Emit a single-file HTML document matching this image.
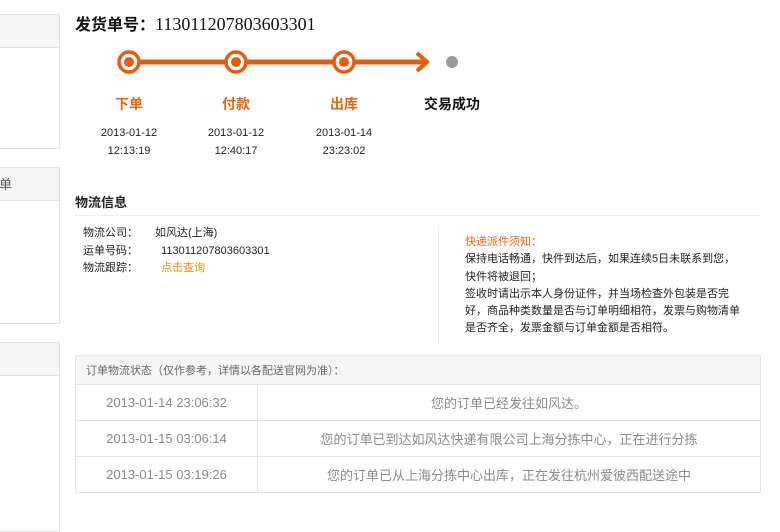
<!DOCTYPE html>
<html><head><meta charset="utf-8"><style>
*{margin:0;padding:0;box-sizing:border-box}
body{width:780px;height:516px;background:#fff;position:relative;overflow:hidden;font-family:"Liberation Sans","Noto Sans CJK SC",sans-serif;color:#222}
.a{position:absolute;white-space:nowrap}
.box{position:absolute;left:-2px;width:62px;border:1px solid #e2e2e2;background:#fff}
.box .h{height:33px;background:#f5f5f5;border-bottom:1px solid #e2e2e2;font-size:13px;color:#555;line-height:33px}
.or{color:#e8650f}
.s{font-size:11px}
table{position:absolute;left:75px;top:355px;width:686px;border-collapse:collapse;font-size:13px;color:#8a8a8a}
td{border:1px solid #e4e4e4;text-align:center;height:36px}
</style></head><body>
<div class="box" style="top:14px;height:135px"><div class="h"></div></div>
<div class="box" style="top:167px;height:157px"><div class="h">单</div></div>
<div class="box" style="top:342px;height:190px"><div class="h"></div></div>

<div class="a" style="left:75px;top:11px;font-size:16px;font-weight:bold;color:#111">发货单号：<span style="font-weight:normal;font-family:'Liberation Serif',serif;font-size:18px">113011207803603301</span></div>

<svg class="a" style="left:0;top:0" width="780" height="90">
<line x1="129" y1="62" x2="425" y2="62" stroke="#e95a0c" stroke-width="5"/>
<polyline points="417,53 427,62 417,71" fill="none" stroke="#e95a0c" stroke-width="4"/>
<g fill="#fff" stroke="#e95a0c" stroke-width="3.5">
<circle cx="129" cy="62" r="10"/><circle cx="236" cy="62" r="10"/><circle cx="344" cy="62" r="10"/></g>
<g fill="#e95a0c"><circle cx="129" cy="62" r="5"/><circle cx="236" cy="62" r="5"/><circle cx="344" cy="62" r="5"/></g>
<circle cx="452" cy="62" r="6" fill="#999"/>
</svg>
<div class="a or" style="left:109px;top:94px;width:40px;text-align:center;font-size:14px;font-weight:bold">下单</div>
<div class="a or" style="left:216px;top:94px;width:40px;text-align:center;font-size:14px;font-weight:bold">付款</div>
<div class="a or" style="left:324px;top:94px;width:40px;text-align:center;font-size:14px;font-weight:bold">出库</div>
<div class="a" style="left:420px;top:94px;width:64px;text-align:center;font-size:14px;font-weight:bold;color:#111">交易成功</div>
<div class="a s" style="left:89px;top:124px;width:80px;text-align:center;line-height:18px">2013-01-12<br>12:13:19</div>
<div class="a s" style="left:196px;top:124px;width:80px;text-align:center;line-height:18px">2013-01-12<br>12:40:17</div>
<div class="a s" style="left:304px;top:124px;width:80px;text-align:center;line-height:18px">2013-01-14<br>23:23:02</div>

<div class="a" style="left:75px;top:192px;font-size:13px;font-weight:bold">物流信息</div>
<div class="a" style="left:75px;top:215px;width:686px;height:1px;background:#eee"></div>
<div class="a s" style="left:83px;top:225px;line-height:17.5px">物流公司：<br>运单号码：<br>物流跟踪：</div>
<div class="a s" style="left:155px;top:225px;line-height:17.5px">如风达(上海)<br>&nbsp;&nbsp;113011207803603301<br><span style="color:#e8900f">&nbsp;&nbsp;点击查询</span></div>
<div class="a" style="left:438px;top:225px;width:1px;height:120px;background:#eee"></div>
<div class="a s" style="left:465px;top:234px;line-height:17.3px"><span class="or">快递派件须知：</span><br>保持电话畅通，快件到达后，如果连续5日未联系到您，<br>快件将被退回；<br>签收时请出示本人身份证件，并当场检查外包装是否完<br>好，商品种类数量是否与订单明细相符，发票与购物清单<br>是否齐全，发票金额与订单金额是否相符。</div>

<table>
<tr><td colspan="2" style="height:29px;background:#f5f5f5;text-align:left;padding-left:10px;font-size:11px;color:#666">订单物流状态（仅作参考，详情以各配送官网为准）：</td></tr>
<tr><td style="width:182px">2013-01-14 23:06:32</td><td>您的订单已经发往如风达。</td></tr>
<tr><td>2013-01-15 03:06:14</td><td>您的订单已到达如风达快递有限公司上海分拣中心，正在进行分拣</td></tr>
<tr><td>2013-01-15 03:19:26</td><td>您的订单已从上海分拣中心出库，正在发往杭州爱彼西配送途中</td></tr>
</table>
</body></html>
